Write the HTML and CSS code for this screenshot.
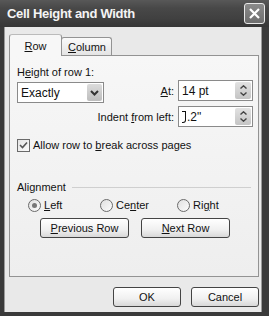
FILE: index.html
```html
<!DOCTYPE html>
<html lang="en">
<head>
    <meta charset="UTF-8">
    <title>Cell Height and Width</title>
    <link rel="stylesheet" href="styles.css">
</head>
<body>
    <div class="window">
        <div class="titlebar">
            <span class="title">Cell Height and Width</span>
            <span class="close">
                <svg width="13" height="13" viewBox="0 0 13 13">
                    <path d="M2 2 L11 11 M11 2 L2 11" stroke="#fff" stroke-width="2.2" fill="none"/>
                </svg>
            </span>
        </div>
        <div class="frame">
            <div class="tabs">
                <div class="tab active"><span><u>R</u>ow</span></div>
                <div class="tab"><span><u>C</u>olumn</span></div>
            </div>
            <div class="panel">
                <div class="label">H<u>e</u>ight of row 1:</div>
                <div class="row-top">
                    <div class="select">
                        <span class="select-text">Exactly</span>
                        <span class="drop">
                            <svg width="9" height="6" viewBox="0 0 9 6">
                                <path d="M1 1 L4.5 4.5 L8 1" stroke="#333" stroke-width="2" fill="none"/>
                            </svg>
                        </span>
                    </div>
                    <div class="field">
                        <span class="field-label"><u>A</u>t:</span>
                        <div class="spin">
                            <span class="spin-text">14 pt</span>
                            <span class="arrows">
                                <svg width="7" height="4" viewBox="0 0 7 4"><path d="M0.5 3.5 L3.5 0.8 L6.5 3.5" stroke="#444" stroke-width="1.4" fill="none"/></svg>
                                <svg width="7" height="4" viewBox="0 0 7 4"><path d="M0.5 0.5 L3.5 3.2 L6.5 0.5" stroke="#444" stroke-width="1.4" fill="none"/></svg>
                            </span>
                        </div>
                    </div>
                </div>
                <div class="field indent">
                    <span class="field-label">Indent <u>f</u>rom left:</span>
                    <div class="spin">
                        <span class="spin-text"><span class="caret"></span>.2"</span>
                        <span class="arrows">
                            <svg width="7" height="4" viewBox="0 0 7 4"><path d="M0.5 3.5 L3.5 0.8 L6.5 3.5" stroke="#444" stroke-width="1.4" fill="none"/></svg>
                            <svg width="7" height="4" viewBox="0 0 7 4"><path d="M0.5 0.5 L3.5 3.2 L6.5 0.5" stroke="#444" stroke-width="1.4" fill="none"/></svg>
                        </span>
                    </div>
                </div>
                <div class="check-row">
                    <span class="checkbox">
                        <svg width="11" height="11" viewBox="0 0 11 11">
                            <path d="M2 5 L4.5 7.5 L9 2.5" stroke="#555" stroke-width="1.6" fill="none"/>
                        </svg>
                    </span>
                    <span>Allow row to <u>b</u>reak across pages</span>
                </div>
                <div class="group-head">
                    <span>Alignment</span>
                    <span class="group-line"></span>
                </div>
                <div class="radios">
                    <div class="radio-item left"><span class="radio checked"></span><span><u>L</u>eft</span></div>
                    <div class="radio-item center"><span class="radio"></span><span>Ce<u>n</u>ter</span></div>
                    <div class="radio-item"><span class="radio"></span><span>Ri<u>g</u>ht</span></div>
                </div>
                <div class="nav-buttons">
                    <button class="btn wide"><u>P</u>revious Row</button>
                    <button class="btn wide"><u>N</u>ext Row</button>
                </div>
            </div>
            <div class="footer">
                <button class="btn small">OK</button>
                <button class="btn small">Cancel</button>
            </div>
        </div>
    </div>
</body>
</html>
```

FILE: styles.css
```css
body {
    margin: 0;
    font-family: "Liberation Sans", Arial, sans-serif;
    font-size: 11px;
    color: #111;
    background: #fff;
}
u {
    text-decoration: underline;
    text-underline-offset: 1px;
}
.window {
    width: 269px;
    height: 316px;
    display: flex;
    flex-direction: column;
    background: #3a3a3a;
}
.titlebar {
    height: 27px;
    flex: none;
    display: flex;
    align-items: center;
    justify-content: space-between;
    padding: 0 4px 0 7px;
    background: linear-gradient(#585858, #484848 30%, #404040 70%, #363636);
}
.title {
    font-family: "Liberation Sans", Arial, sans-serif;
    font-weight: bold;
    font-size: 13px;
    color: #f4f4f4;
    letter-spacing: -0.3px;
}
.close {
    width: 19px;
    height: 19px;
    border: 1px solid #e8e8e8;
    border-radius: 3px;
    background: linear-gradient(#8a8a8a, #6e6e6e);
    display: flex;
    align-items: center;
    justify-content: center;
}
.frame {
    flex: 1;
    border-left: 4px solid #3a3a3a;
    border-right: 7px solid #3a3a3a;
    border-bottom: 4px solid #3a3a3a;
    background: #e9e9e9;
    padding: 0 3px 0 5px;
    box-shadow: inset 1px 0 0 #9a9a9a, inset -1px 0 0 #9a9a9a;
}
.tabs {
    display: flex;
    align-items: flex-end;
    height: 28px;
}
.tab {
    height: 17px;
    padding: 0 5px 0 6px;
    border: 1px solid #939393;
    border-bottom: none;
    border-radius: 3px 3px 0 0;
    background: linear-gradient(#fafafa, #e4e4e4);
    display: flex;
    align-items: center;
    margin-left: -1px;
}
.tab.active {
    width: 39px;
    padding: 0 6px;
    justify-content: center;
    margin-left: 0;
    background: #f7f7f7;
    position: relative;
    z-index: 1;
    margin-bottom: -1px;
    height: 21px;
    border-top-color: #bbb;
}
.panel {
    border: 1px solid #939393;
    background: linear-gradient(#f7f7f7, #eeeeee);
    height: 220px;
    padding: 0 5px 0 7px;
}
.label {
    margin-top: 10px;
    line-height: 13px;
}
.row-top {
    display: flex;
    justify-content: space-between;
    align-items: flex-start;
    height: 24px;
}
.select {
    margin-top: 3px;
    width: 82px;
    height: 19px;
    border: 1px solid #8a8a8a;
    background: #fff;
    display: flex;
    align-items: center;
    justify-content: space-between;
    padding-left: 3px;
    font-size: 12px;
}
.drop {
    width: 15px;
    height: 17px;
    margin-right: 1px;
    border-radius: 2px;
    background: linear-gradient(#dcdcdc, #bdbdbd);
    display: flex;
    align-items: center;
    justify-content: center;
}
.field {
    display: flex;
    align-items: center;
    gap: 4px;
    margin-top: 1px;
}
.spin {
    width: 70px;
    height: 19px;
    border: 1px solid #8a8a8a;
    background: #fff;
    display: flex;
    align-items: center;
    justify-content: space-between;
    padding-left: 3px;
    font-size: 12px;
}
.spin-text {
    display: flex;
    align-items: center;
}
.caret {
    display: inline-block;
    width: 4px;
    height: 12px;
    border-top: 1px solid #111;
    border-right: 1px solid #111;
    border-bottom: 1px solid #111;
    border-bottom-right-radius: 3px;
    box-sizing: border-box;
    margin-right: 1px;
}
.arrows {
    width: 16px;
    height: 17px;
    margin-right: 1px;
    border-radius: 2px;
    background: linear-gradient(#e2e2e2, #c4c4c4);
    display: flex;
    flex-direction: column;
    align-items: center;
    justify-content: center;
    gap: 3px;
}
.indent {
    justify-content: flex-end;
    margin-top: 3px;
}
.check-row {
    display: flex;
    align-items: center;
    gap: 3px;
    margin-top: 12px;
    line-height: 13px;
}
.checkbox {
    width: 11px;
    height: 11px;
    border: 1px solid #6a6a6a;
    background: linear-gradient(135deg, #e4e4e4, #fafafa);
    display: flex;
}
.group-head {
    display: flex;
    align-items: center;
    gap: 6px;
    margin-top: 29px;
    line-height: 13px;
}
.group-line {
    flex: 1;
    height: 1px;
    background: #cfcfcf;
    margin-right: 2px;
}
.radios {
    display: flex;
    margin-top: 5px;
    padding-left: 11px;
    line-height: 13px;
}
.radio-item {
    display: flex;
    align-items: center;
    gap: 3px;
}
.radio-item.left {
    width: 72px;
}
.radio-item.center {
    width: 77px;
}
.radio {
    width: 11px;
    height: 11px;
    border: 1px solid #6a6a6a;
    border-radius: 50%;
    background: linear-gradient(135deg, #e0e0e0, #fcfcfc);
    display: flex;
    align-items: center;
    justify-content: center;
}
.radio.checked::after {
    content: "";
    width: 5px;
    height: 5px;
    border-radius: 50%;
    background: #777;
}
.nav-buttons {
    display: flex;
    gap: 12px;
    margin-top: 6px;
    padding-left: 23px;
}
.btn {
    font-family: "Liberation Sans", Arial, sans-serif;
    font-size: 11px;
    color: #111;
    height: 20px;
    border: 1px solid #444;
    border-radius: 3px;
    background: linear-gradient(#ffffff, #f0f0f0 60%, #d8d8d8);
    padding: 0;
}
.btn.wide {
    width: 89px;
}
.btn.small {
    width: 68px;
}
.footer {
    display: flex;
    justify-content: flex-end;
    gap: 10px;
    margin-top: 10px;
}
```
